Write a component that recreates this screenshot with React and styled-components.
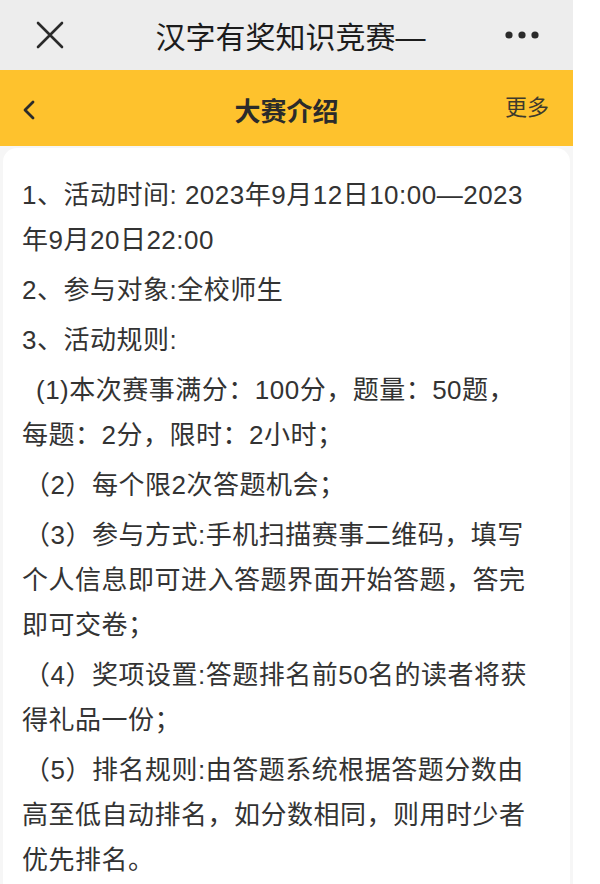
import styled, { createGlobalStyle } from "styled-components";

const GlobalStyle = createGlobalStyle`
  html, body {
    margin: 0;
    padding: 0;
    background: #ffffff;
  }
  body {
    font-family: "Liberation Sans", "Noto Sans CJK SC", sans-serif;
  }
`;

const Page = styled.div`
  width: 600px;
  height: 884px;
  background: #ffffff;
`;

const Phone = styled.div`
  width: 573px;
  height: 884px;
  display: flex;
  flex-direction: column;
  background: #f6f6f6;
  overflow: hidden;
`;

const TopBar = styled.div`
  height: 70px;
  flex-shrink: 0;
  background: #ededed;
  display: grid;
  grid-template-columns: 100px 1fr 100px;
  align-items: center;
`;

const IconCell = styled.div`
  display: flex;
  align-items: center;
  justify-content: ${(p) => (p.$right ? "flex-end" : "flex-start")};
  padding: ${(p) => (p.$right ? "0 34px 0 0" : "0 0 0 36px")};
  color: #2a2a2a;
`;

const TopTitle = styled.div`
  text-align: center;
  font-size: 30px;
  color: #1c1c1c;
  white-space: nowrap;
  padding-left: 8px;
`;

const YellowBar = styled.div`
  height: 76px;
  flex-shrink: 0;
  background: #fec22d;
  display: grid;
  grid-template-columns: 100px 1fr 100px;
  align-items: center;
`;

const BackCell = styled.div`
  padding-left: 22px;
  display: flex;
  align-items: center;
  padding-top: 4px;
`;

const BarTitle = styled.div`
  text-align: center;
  font-size: 26px;
  font-weight: bold;
  color: #2b2b2b;
  padding-top: 2px;
`;

const MoreLink = styled.div`
  text-align: right;
  padding-right: 24px;
  font-size: 22px;
  color: #3e3a2c;
  padding-bottom: 6px;
`;

const Card = styled.div`
  flex: 1;
  margin: 2px 3px 3px;
  background: #ffffff;
  border-radius: 14px 14px 0 0;
  padding: 25px 32px 0 19px;
`;

const Para = styled.p`
  margin: 0 0 5px;
  font-size: 26px;
  line-height: 45px;
  letter-spacing: 0.5px;
  color: #333333;
  text-indent: ${(p) => p.$indent || 0}px;
`;

const CloseIcon = () => (
  <svg width="28" height="28" viewBox="0 0 28 28">
    <path d="M2 2 L26 26 M26 2 L2 26" stroke="currentColor" strokeWidth="2.6" strokeLinecap="round" />
  </svg>
);

const MoreDots = () => (
  <svg width="34" height="10" viewBox="0 0 34 10">
    <circle cx="4" cy="5" r="3.6" fill="currentColor" />
    <circle cx="17" cy="5" r="3.6" fill="currentColor" />
    <circle cx="30" cy="5" r="3.6" fill="currentColor" />
  </svg>
);

const BackIcon = () => (
  <svg width="14" height="20" viewBox="0 0 14 20">
    <path d="M11 2 L3 10 L11 18" fill="none" stroke="#2b2b2b" strokeWidth="2.8" strokeLinecap="round" strokeLinejoin="round" />
  </svg>
);

const rules = [
  { text: "1、活动时间: 2023年9月12日10:00—2023年9月20日22:00" },
  { text: "2、参与对象:全校师生" },
  { text: "3、活动规则:" },
  { text: "(1)本次赛事满分：100分，题量：50题，每题：2分，限时：2小时；", indent: 14 },
  { text: "（2）每个限2次答题机会；", indent: 2 },
  { text: "（3）参与方式:手机扫描赛事二维码，填写个人信息即可进入答题界面开始答题，答完即可交卷；", indent: 2 },
  { text: "（4）奖项设置:答题排名前50名的读者将获得礼品一份；", indent: 2 },
  { text: "（5）排名规则:由答题系统根据答题分数由高至低自动排名，如分数相同，则用时少者优先排名。", indent: 2 },
];

export default function App() {
  return (
    <Page>
      <GlobalStyle />
      <Phone>
        <TopBar>
          <IconCell>
            <CloseIcon />
          </IconCell>
          <TopTitle>汉字有奖知识竞赛—</TopTitle>
          <IconCell $right>
            <MoreDots />
          </IconCell>
        </TopBar>
        <YellowBar>
          <BackCell>
            <BackIcon />
          </BackCell>
          <BarTitle>大赛介绍</BarTitle>
          <MoreLink>更多</MoreLink>
        </YellowBar>
        <Card>
          {rules.map((r, i) => (
            <Para key={i} $indent={r.indent}>
              {r.text}
            </Para>
          ))}
        </Card>
      </Phone>
    </Page>
  );
}
